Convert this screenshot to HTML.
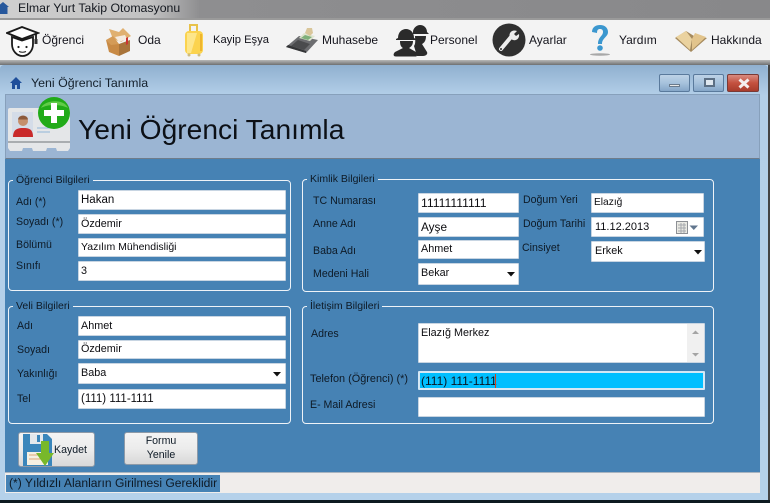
<!DOCTYPE html>
<html lang="tr"><head><meta charset="utf-8"><style>
html,body{margin:0;padding:0;background:#fff}
#r{position:relative;width:770px;height:503px;overflow:hidden;font-family:"Liberation Sans",sans-serif;font-size:12px;color:#111;filter:blur(.35px);background:#b5d0e8}
#r div,#r svg,#r span{position:absolute;box-sizing:border-box}
.t{white-space:nowrap;line-height:14px}
.i{background:#fff;border:1px solid #c8d5e2;border-radius:1px;white-space:nowrap;line-height:18px;padding-left:2px;font-size:10.8px;color:#0c0c10}
.g{border:1.5px solid #eef3f8;border-radius:4px}
.l{background:#4682b4;padding:0 3px;white-space:nowrap;line-height:13px;height:13px;font-size:10.5px;color:#0e1a26}
.b{color:#0e1a26;font-size:10.6px}
.m{color:#14141c;font-size:12px}
.w{border:1px solid #5a7a9c;border-radius:2px;top:74px;height:18px;background:linear-gradient(#bdd2e6,#a7c2dc 50%,#85a6c8)}
</style></head><body><div id="r">
<div style="left:0;top:0;width:770px;height:18px;background:linear-gradient(90deg,#cfcfcf 0,#c2c2c2 150px,#8e8e90 200px,#88888a 770px)"></div>
<div style="left:0;top:18px;width:770px;height:2px;background:#9a9a9a"></div>
<svg style="left:0;top:1px" width="10" height="13" viewBox="0 0 10 13"><path d="M-3 6L3 1L9 6L7.500 6V13H-1V6Z" fill="#27589c"/></svg>
<div class="t" style="left:18px;top:1px;font-size:12.300px;color:#14181f">Elmar Yurt Takip Otomasyonu</div>

<div style="left:0;top:20px;width:770px;height:40px;background:#f3f3f3"></div>
<div style="left:0;top:60px;width:770px;height:5px;background:linear-gradient(#b8b8b8,#6f7072)"></div>

<svg style="left:6px;top:25px" width="34" height="32" viewBox="0 0 34 32"><path d="M1 8L16 2L32 8L16 14Z" fill="#fff" stroke="#1a1a1a" stroke-width="1.800"/><path d="M30 9V15" stroke="#1a1a1a" stroke-width="1.800" fill="none"/><path d="M6 12V19C6 26 11 31 16.500 31C22 31 27 26 27 19V12L16 15.500Z" fill="#fff" stroke="#1a1a1a" stroke-width="1.800"/><circle cx="12.500" cy="22" r="1.100" fill="#222"/><circle cx="20.500" cy="22" r="1.100" fill="#222"/><path d="M13 26.500Q16.500 28 20 26.500" stroke="#222" fill="none"/><rect x="28.500" y="14" width="3" height="5" fill="#333"/></svg>
<div class="t m" style="left:42px;top:33px">Öğrenci</div>

<svg style="left:105px;top:25px" width="28" height="32" viewBox="0 0 28 32"><path d="M1 15L14 19V31L4 27Z" fill="#c88a45"/><path d="M14 19L25 15V26L14 31Z" fill="#a9743a"/><path d="M4 4L14 7L18 3L26 11L16 17L8 14Z" fill="#e0b070"/><path d="M10 12L20 10L22 14L14 17Z" fill="#f4eadf"/><path d="M21 13L23 12V19L21 20Z" fill="#c33"/><path d="M1 15L8 11L14 19L6 20Z" fill="#d49b57"/></svg>
<div class="t m" style="left:138px;top:33px">Oda</div>

<svg style="left:184px;top:23px" width="20" height="34" viewBox="0 0 20 34"><path d="M6 9V2H13V9" fill="none" stroke="#e8c24a" stroke-width="2"/><rect x="1" y="8" width="18" height="23" rx="4" fill="#fbd34e"/><path d="M3 10H13L7 30H3Z" fill="#fde68a"/><rect x="16" y="11" width="2" height="17" fill="#eeb52e"/><circle cx="5" cy="32" r="1.500" fill="#cdbb80"/><circle cx="15" cy="32" r="1.500" fill="#cdbb80"/></svg>
<div class="t m" style="left:213px;top:33px;font-size:11.200px">Kayip Eşya</div>

<svg style="left:285px;top:27px" width="34" height="27" viewBox="0 0 34 27"><path d="M1 20L14 9L33 13L21 26Z" fill="#6c6d70"/><path d="M1 20L21 26V24L3 18Z" fill="#333436"/><path d="M14 11L19 6L30 9L25 14Z" fill="#dfe5d0"/><path d="M16 11L20 8L27 10L23 13Z" fill="#7fb07a"/><path d="M20 6L22 1H27L28 6L25 9Z" fill="#d9c69a"/><path d="M6 19L13 13L25 17L19 23Z" fill="#4a4b4d"/></svg>
<div class="t m" style="left:322px;top:33px">Muhasebe</div>

<svg style="left:393px;top:23px" width="36" height="34" viewBox="0 0 36 34"><g fill="#2a2a2a"><path d="M20 9C20 5 24 2 27 2C31 2 34 5 34 9L36 11H20Z"/><path d="M22 13H33C33 18 31 20 29 21L34 29C35 31 33 33 30 33H24L21 23C23 20 22 16 22 13Z"/><path d="M5 15C5 9 9 6 13 6C17 6 21 9 21 15L23 16V17H3V16Z"/><path d="M7 18H20C20 22 18 24 16 25L23 29C25 31 24 33.500 23 33.500H3C0 33.500 0 31 2 29L10 25C8 24 7 22 7 18Z"/></g></svg>
<div class="t m" style="left:430px;top:33px">Personel</div>

<svg style="left:492px;top:23px" width="34" height="34" viewBox="0 0 34 34"><circle cx="17" cy="17" r="16.500" fill="#303030"/><path d="M9 26L19 14" stroke="#eee" stroke-width="4" stroke-linecap="round"/><path d="M18 15C16 10 20 6 25 8L22 11L24 13L27 11C28 16 23 19 19 16Z" fill="#eee"/><circle cx="9" cy="26" r="1" fill="#303030"/></svg>
<div class="t m" style="left:529px;top:33px">Ayarlar</div>

<svg style="left:588px;top:23px" width="24" height="34" viewBox="0 0 24 34"><path d="M4 9C4 4 8 2 12 2C17 2 20 5 20 9C20 14 14 15 14 21H10C10 14 15 13 15 9C15 7 14 6 12 6C10 6 9 7 9 10Z" fill="#3b97cf"/><circle cx="12" cy="25" r="2.800" fill="#3b97cf"/><ellipse cx="12" cy="31.500" rx="10" ry="1.200" fill="#a8a8a8"/></svg>
<div class="t m" style="left:619px;top:33px">Yardım</div>

<svg style="left:674px;top:30px" width="34" height="23" viewBox="0 0 34 23"><path d="M1 8L12 1L20 6L33 8L17 22Z" fill="#a58a5e"/><path d="M2 7L12 1L18 9L16 20Z" fill="#ead29f"/><path d="M18 9L21 3L32 7L18 20Z" fill="#e2c48c"/></svg>
<div class="t m" style="left:711px;top:33px">Hakkında</div>

<div style="left:0;top:65px;width:768px;height:436px;background:linear-gradient(#90b0d0 0,#b3cfe8 30px,#b5d1ea 100%);border-radius:4px 4px 0 0"></div>
<div style="left:768px;top:65px;width:2px;height:438px;background:#444"></div>
<div style="left:0;top:500px;width:770px;height:3px;background:#0d1a20"></div>
<svg style="left:10px;top:77px" width="12" height="12" viewBox="0 0 12 12"><path d="M0 6L6 0L12 6H10V12H7V8H5V12H2V6Z" fill="#1f4f9b"/></svg>
<div class="t" style="left:31px;top:76px;color:#14202c;font-size:12.400px">Yeni Öğrenci Tanımla</div>
<div class="w" style="left:659px;width:31px"><span style="left:9px;top:9px;width:11px;height:3px;background:#e8e8e8;border:1px solid #6a7a8c"></span></div>
<div class="w" style="left:693px;width:31px"><span style="left:10px;top:3px;width:11px;height:9px;background:#dfe7ef;border:2px solid #5c6f84"></span></div>
<div class="w" style="left:727px;width:32px;background:linear-gradient(#d98b80,#c4513f 50%,#a83c2c);border-color:#7a3a36"><svg style="left:9px;top:3px" width="14" height="11" viewBox="0 0 14 11"><path d="M2.500 1.500L11.500 9.500M11.500 1.500L2.500 9.500" stroke="#f4eeee" stroke-width="3"/></svg></div>

<div style="left:5px;top:94px;width:755px;height:379px;background:#4682b4"></div>
<div style="left:5px;top:94px;width:755px;height:65px;background:#9bb5d3;border:1px solid #87a0bb;border-bottom:1px solid #6f7c8a"></div>

<svg style="left:5px;top:95px" width="70" height="64" viewBox="5 95 70 64"><path d="M8 110Q8 108 10 108H68Q70 108 70 110V148L68 151H57L56 148H47L46 151H33L32 148H23L22 151H10L8 148Z" fill="#e4e6e8"/><path d="M8 141H70V143H8Z" fill="#a9adb0"/><rect x="12" y="112" width="21" height="25" fill="#d4dce8"/><circle cx="23" cy="121" r="5" fill="#c58f6c"/><path d="M23 115.500a5.500 4 0 0 1 5 4h-10a5.500 4 0 0 1 5-4Z" fill="#8c5a3c"/><path d="M13 137C13 129 18 128 23 128C29 128 33 129 33 137Z" fill="#c92a2a"/><path d="M37 128H55M37 132H50" stroke="#8fb5d8"/><circle cx="54" cy="113" r="16" fill="#21ab18"/><path d="M41 108C44 100 64 98 68 108C60 104 48 104 41 108Z" fill="#7dd85e" opacity=".7"/><path d="M51 103H57V110H64V116H57V123H51V116H44V110H51Z" fill="#fff"/></svg>
<div class="t" style="left:78px;top:113px;font-size:28.200px;line-height:32px;color:#0c1016">Yeni Öğrenci Tanımla</div>

<div class="g" style="left:8px;top:180px;width:283px;height:111px"></div>
<div class="l" style="left:13px;top:174px">Öğrenci Bilgileri</div>
<div class="t b" style="left:16px;top:195px">Adı (*)</div>
<div class="t b" style="left:16px;top:215px">Soyadı (*)</div>
<div class="t b" style="left:16px;top:238px">Bölümü</div>
<div class="t b" style="left:16px;top:259px">Sınıfı</div>
<div class="i" style="left:78px;top:190px;width:208px;height:20px;font-size:11.500px">Hakan</div>
<div class="i" style="left:78px;top:214px;width:208px;height:20px">Özdemir</div>
<div class="i" style="left:78px;top:238px;width:208px;height:19px;font-size:10.500px;line-height:17px">Yazılım Mühendisliği</div>
<div class="i" style="left:78px;top:261px;width:208px;height:20px">3</div>

<div class="g" style="left:302px;top:179px;width:412px;height:113px"></div>
<div class="l" style="left:307px;top:173px">Kimlik Bilgileri</div>
<div class="t b" style="left:313px;top:194px">TC Numarası</div>
<div class="t b" style="left:313px;top:217px">Anne Adı</div>
<div class="t b" style="left:313px;top:244px">Baba Adı</div>
<div class="t b" style="left:313px;top:267px">Medeni Hali</div>
<div class="i" style="left:418px;top:193px;width:101px;height:20px;font-size:12.200px">11111111111</div>
<div class="i" style="left:418px;top:217px;width:101px;height:20px;font-size:11.800px">Ayşe</div>
<div class="i" style="left:418px;top:240px;width:101px;height:19px;line-height:17px">Ahmet</div>
<div class="i" style="left:418px;top:263px;width:101px;height:22px">Bekar<svg style="left:88px;top:8px" width="8" height="5"><path d="M0 0H8L4 4.500Z" fill="#111"/></svg></div>
<div class="t b" style="left:523px;top:193px">Doğum Yeri</div>
<div class="t b" style="left:523px;top:217px">Doğum Tarihi</div>
<div class="t b" style="left:522px;top:241px">Cinsiyet</div>
<div class="i" style="left:591px;top:193px;width:113px;height:20px;font-size:10.200px">Elazığ</div>
<div class="i" style="left:591px;top:217px;width:113px;height:20px;font-size:11px;padding-left:3px">11.12.2013<svg style="left:84px;top:3px" width="24" height="14" viewBox="0 0 24 14"><rect x=".5" y=".5" width="11" height="12" fill="#e9e9e3" stroke="#8d9095"/><path d="M2 4H10M2 7H10M2 10H10M5 2V12M8 2V12" stroke="#a6a9ae"/><path d="M13.500 4.500H22L17.800 9Z" fill="#61768e"/></svg></div>
<div class="i" style="left:591px;top:241px;width:114px;height:21px;padding-left:3px">Erkek<svg style="left:102px;top:8px" width="8" height="5"><path d="M0 0H8L4 4.500Z" fill="#111"/></svg></div>

<div class="g" style="left:8px;top:306px;width:283px;height:118px"></div>
<div class="l" style="left:13px;top:300px">Veli Bilgileri</div>
<div class="t b" style="left:17px;top:319px">Adı</div>
<div class="t b" style="left:17px;top:343px">Soyadı</div>
<div class="t b" style="left:17px;top:367px">Yakınlığı</div>
<div class="t b" style="left:17px;top:392px">Tel</div>
<div class="i" style="left:78px;top:316px;width:208px;height:20px">Ahmet</div>
<div class="i" style="left:78px;top:340px;width:208px;height:19px;line-height:17px">Özdemir</div>
<div class="i" style="left:78px;top:363px;width:208px;height:21px">Baba<svg style="left:194px;top:8px" width="8" height="5"><path d="M0 0H8L4 4.500Z" fill="#111"/></svg></div>
<div class="i" style="left:78px;top:389px;width:208px;height:20px;font-size:11.500px">(111) 111-1111</div>

<div class="g" style="left:302px;top:306px;width:412px;height:118px"></div>
<div class="l" style="left:307px;top:300px">İletişim Bilgileri</div>
<div class="t b" style="left:311px;top:327px">Adres</div>
<div class="t b" style="left:310px;top:372px;font-size:10.900px">Telefon (Öğrenci) (*)</div>
<div class="t b" style="left:310px;top:398px">E- Mail Adresi</div>
<div class="i" style="left:418px;top:323px;width:287px;height:40px">Elazığ Merkez<span style="right:0;top:0;width:17px;height:38px;background:#f0f0f0"></span><svg style="left:272px;top:5px" width="10" height="30"><path d="M1 5H8L4.500 1.500Z" fill="#a4a4a4"/><path d="M1 24H8L4.500 27.500Z" fill="#a4a4a4"/></svg></div>
<div class="i" style="left:418px;top:371px;width:287px;height:19px;background:#00bfff;border:2px solid #d5e8f5;padding-left:1px;line-height:16px;font-size:12px;color:#0b1420">(111) 111-1111<span style="left:75px;top:1px;width:1px;height:14px;background:#d8401a"></span></div>
<div class="i" style="left:418px;top:397px;width:287px;height:20px"></div>

<div style="left:18px;top:432px;width:77px;height:35px;background:linear-gradient(#f4f4f4,#ececec 50%,#d8d8d8);border:1px solid #8d9aa8;border-radius:3px"></div>
<svg style="left:22px;top:433px" width="33" height="34" viewBox="0 0 33 34"><path d="M1 1H25L30 6V33H1Z" fill="#3a86bb"/><rect x="8" y="1" width="13" height="10" fill="#e3e8ec"/><rect x="15" y="2" width="3" height="7" fill="#3a86bb"/><rect x="5" y="19" width="21" height="13" fill="#f5f0e2"/><path d="M7 22H23M7 26H23" stroke="#e0a878"/><path d="M19 8H27V20H32L23 33L14 20H19Z" fill="#78b82a"/></svg>
<div class="t b" style="left:54px;top:443px">Kaydet</div>
<div style="left:124px;top:432px;width:74px;height:33px;background:linear-gradient(#f4f4f4,#ececec 50%,#d8d8d8);border:1px solid #8d9aa8;border-radius:3px"></div>
<div class="t b" style="left:124px;top:434px;width:74px;text-align:center;line-height:14px;white-space:normal">Formu<br>Yenile</div>

<div style="left:5px;top:472px;width:755px;height:21px;background:#f0edeb;border-top:1px solid #a8b4c0"></div>
<div class="t" style="left:6px;top:475px;width:214px;height:17px;background:#4682b4;color:#0e1a26;line-height:16px;padding-left:3px;font-size:12.100px">(*) Yıldızlı Alanların Girilmesi Gereklidir</div>
</div></body></html>
